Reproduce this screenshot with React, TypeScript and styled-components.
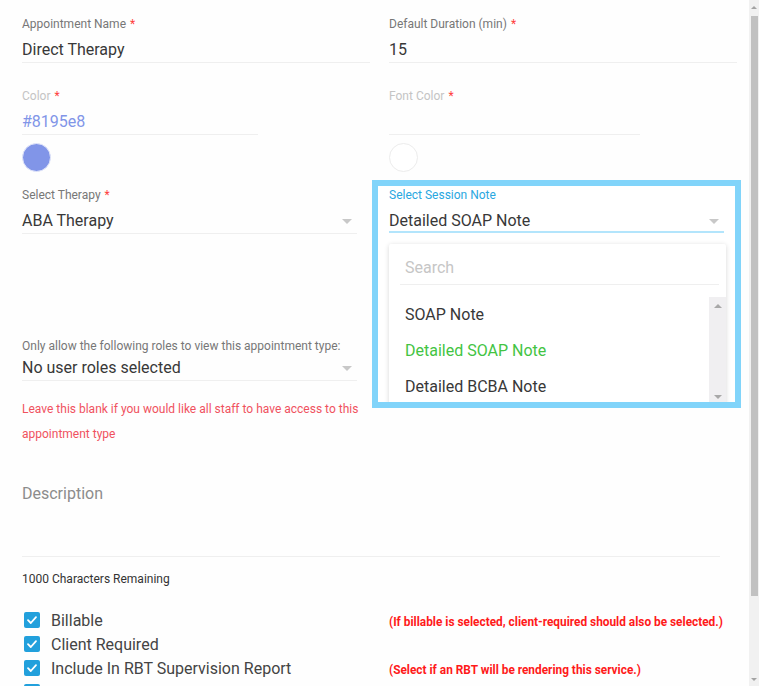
import React from "react";
import styled, { createGlobalStyle } from "styled-components";

type Tone = "normal" | "muted" | "focus";

const labelColors: { [key in Tone]: string } = {
  normal: "#777777",
  muted: "#c4c4c4",
  focus: "#2aa7df",
};

const GlobalStyle = createGlobalStyle`
  html, body {
    margin: 0;
    padding: 0;
    height: 100%;
    overflow: hidden;
  }
  body {
    font-family: Roboto, "Liberation Sans", Arial, sans-serif;
    background: #ffffff;
    color: #383838;
  }
  #root {
    height: 100%;
  }
`;

const Page = styled.div`
  display: flex;
  height: 100vh;
  overflow: hidden;
  background: #fefefe;
`;

const Content = styled.div`
  flex: 1;
  overflow: hidden;
`;

/* drawn scrollbar: rail with arrow buttons and a thumb */
const Rail = styled.div<{ $width: number; $bg: string }>`
  flex: none;
  display: flex;
  flex-direction: column;
  width: ${(p) => p.$width}px;
  background: ${(p) => p.$bg};
`;

const ArrowButton = styled.div<{ $size: number }>`
  flex: none;
  height: ${(p) => p.$size}px;
  display: flex;
  align-items: center;
  justify-content: center;
`;

const Arrow = styled.span<{ $dir: "up" | "down"; $half: number; $color: string }>`
  width: 0;
  height: 0;
  border-left: ${(p) => p.$half}px solid transparent;
  border-right: ${(p) => p.$half}px solid transparent;
  ${(p) =>
    p.$dir === "up"
      ? `border-bottom: ${p.$half}px solid ${p.$color};`
      : `border-top: ${p.$half}px solid ${p.$color};`}
`;

const Track = styled.div`
  flex: 1;
`;

const Thumb = styled.div`
  height: 580px;
  margin: 2px 1px 0 2px;
  background: #c1c1c1;
`;

const Form = styled.div`
  padding: 16px 0 74px 22px;
  width: 715px;
`;

const TwoCol = styled.div<{ $gap: number }>`
  display: grid;
  grid-template-columns: 348px 348px;
  column-gap: 19px;
  margin-top: ${(p) => p.$gap}px;
`;

const Field = styled.div<{ $width?: number }>`
  width: ${(p) => (p.$width ? `${p.$width}px` : "100%")};
`;

const Label = styled.div<{ $tone?: Tone }>`
  font-size: 12px;
  line-height: 16px;
  color: ${(p) => labelColors[p.$tone || "normal"]};
  white-space: nowrap;
`;

const Req = styled.span`
  color: #ff3d3d;
  margin-left: 4px;
`;

const Value = styled.div<{ $color?: string; $gap?: number; $focused?: boolean }>`
  display: flex;
  align-items: center;
  justify-content: space-between;
  margin-top: ${(p) => (p.$gap === undefined ? 8 : p.$gap)}px;
  min-height: 20px;
  font-size: 16px;
  line-height: 20px;
  color: ${(p) => p.$color || "#383838"};
  padding-bottom: ${(p) => (p.$focused ? 0 : 2)}px;
  border-bottom: ${(p) => (p.$focused ? "2px solid #b3e5fc" : "1px solid #efefef")};
`;

const Caret = styled.span`
  width: 0;
  height: 0;
  margin-right: 5px;
  border-left: 5px solid transparent;
  border-right: 5px solid transparent;
  border-top: 5px solid #c8c8c8;
`;

const Swatch = styled.div<{ $fill: string; $ring: string }>`
  width: 29px;
  height: 29px;
  box-sizing: border-box;
  margin-top: 8px;
  border-radius: 50%;
  background: ${(p) => p.$fill};
  border: 1px solid ${(p) => p.$ring};
`;

const SessionCell = styled.div`
  position: relative;
`;

/* highlight ring drawn around the open session-note select */
const FocusFrame = styled.div`
  position: absolute;
  top: -7px;
  left: -17px;
  width: 369px;
  height: 228px;
  box-sizing: border-box;
  border: 6px solid #81d4fa;
  background: #ffffff;
  padding: 1px 11px 0;
  overflow: hidden;
  z-index: 2;
`;

const Menu = styled.div`
  width: 337px;
  margin-top: 11px;
  background: #ffffff;
  border-radius: 2px;
  box-shadow: 0 1px 5px rgba(0, 0, 0, 0.16);
`;

const SearchRow = styled.div`
  padding: 14px 16px 6px;
  font-size: 16px;
  line-height: 20px;
  color: #c6c6c6;
`;

const Divider = styled.div`
  margin: 0 7px 0 11px;
  border-bottom: 1px solid #efefef;
`;

const OptionPane = styled.div`
  display: flex;
  margin-top: 12px;
  height: 108px;
`;

const OptionList = styled.div`
  flex: 1;
  margin-top: -1px;
`;

const Option = styled.div<{ $selected?: boolean }>`
  height: 36px;
  display: flex;
  align-items: center;
  padding-left: 16px;
  font-size: 16px;
  color: ${(p) => (p.$selected ? "#43c443" : "#383838")};
`;

const Block = styled.div<{ $gap: number; $width?: number }>`
  margin-top: ${(p) => p.$gap}px;
  width: ${(p) => (p.$width ? `${p.$width}px` : "auto")};
`;

const Hint = styled.div`
  margin-top: 16px;
  font-size: 12px;
  line-height: 25px;
  color: #f0525e;
`;

const TextArea = styled.div`
  width: 698px;
  height: 73px;
  box-sizing: border-box;
  font-size: 16px;
  line-height: 20px;
  color: #8c8c8c;
  border-bottom: 1px solid #efefef;
`;

const Counter = styled.div`
  margin-top: 15px;
  font-size: 12px;
  line-height: 14px;
  color: #333333;
`;

const CheckList = styled.div`
  margin-top: 22px;
`;

const CheckRow = styled.div`
  display: grid;
  grid-template-columns: 348px 348px;
  column-gap: 19px;
  height: 24px;
  align-items: center;
`;

const CheckItem = styled.label`
  display: flex;
  align-items: center;
  gap: 11px;
  padding-left: 2px;
  font-size: 16px;
  color: #444444;
`;

const Box = styled.span`
  display: inline-flex;
  align-items: center;
  justify-content: center;
  width: 16px;
  height: 16px;
  border-radius: 2px;
  background: #22a0dc;
`;

const Note = styled.div`
  padding-top: 3px;
  font-size: 11.85px;
  font-weight: 700;
  color: #ff1a1a;
  white-space: nowrap;
`;

const Checkbox: React.FC = () => (
  <Box>
    <svg width="12" height="12" viewBox="0 0 12 12">
      <polyline
        points="2,6.2 4.8,9 10,3.2"
        fill="none"
        stroke="#ffffff"
        strokeWidth="1.8"
        strokeLinecap="round"
        strokeLinejoin="round"
      />
    </svg>
  </Box>
);

const checks: { label: string; note?: string }[] = [
  { label: "Billable", note: "(If billable is selected, client-required should also be selected.)" },
  { label: "Client Required" },
  { label: "Include In RBT Supervision Report", note: "(Select if an RBT will be rendering this service.)" },
  { label: "" },
];

const sessionNotes = ["SOAP Note", "Detailed SOAP Note", "Detailed BCBA Note"];

export default function App() {
  return (
    <>
      <GlobalStyle />
      <Page>
        <Content>
          <Form>
            <TwoCol $gap={0}>
              <Field>
                <Label>
                  Appointment Name<Req>*</Req>
                </Label>
                <Value>Direct Therapy</Value>
              </Field>
              <Field>
                <Label>
                  Default Duration (min)<Req>*</Req>
                </Label>
                <Value>15</Value>
              </Field>
            </TwoCol>

            <TwoCol $gap={25}>
              <div>
                <Field $width={236}>
                  <Label $tone="muted">
                    Color<Req>*</Req>
                  </Label>
                  <Value $color="#8195e8">#8195e8</Value>
                </Field>
                <Swatch $fill="#8195e8" $ring="#e4e8fa" />
              </div>
              <div>
                <Field $width={251}>
                  <Label $tone="muted">
                    Font Color<Req>*</Req>
                  </Label>
                  <Value />
                </Field>
                <Swatch $fill="#ffffff" $ring="#ececec" />
              </div>
            </TwoCol>

            <TwoCol $gap={15}>
              <Field $width={335}>
                <Label>
                  Select Therapy<Req>*</Req>
                </Label>
                <Value>
                  ABA Therapy
                  <Caret />
                </Value>
              </Field>
              <SessionCell>
                <FocusFrame>
                  <Field $width={335}>
                    <Label $tone="focus">Select Session Note</Label>
                    <Value $gap={8} $focused>
                      Detailed SOAP Note
                      <Caret />
                    </Value>
                  </Field>
                  <Menu>
                    <SearchRow>Search</SearchRow>
                    <Divider />
                    <OptionPane>
                      <OptionList>
                        {sessionNotes.map((name) => (
                          <Option key={name} $selected={name === "Detailed SOAP Note"}>
                            {name}
                          </Option>
                        ))}
                      </OptionList>
                      <Rail $width={17} $bg="#f0eff1">
                        <ArrowButton $size={17}>
                          <Arrow $dir="up" $half={4} $color="#a8a8a8" />
                        </ArrowButton>
                        <Track />
                        <ArrowButton $size={17}>
                          <Arrow $dir="down" $half={4} $color="#a8a8a8" />
                        </ArrowButton>
                      </Rail>
                    </OptionPane>
                  </Menu>
                </FocusFrame>
              </SessionCell>
            </TwoCol>

            <Block $gap={104} $width={370}>
              <Field $width={335}>
                <Label>Only allow the following roles to view this appointment type:</Label>
                <Value $gap={4}>
                  No user roles selected
                  <Caret />
                </Value>
              </Field>
              <Hint>Leave this blank if you would like all staff to have access to this appointment type</Hint>
            </Block>

            <Block $gap={37}>
              <TextArea>Description</TextArea>
            </Block>
            <Counter>1000 Characters Remaining</Counter>

            <CheckList>
              {checks.map((c, i) => (
                <CheckRow key={i}>
                  <CheckItem>
                    <Checkbox />
                    {c.label}
                  </CheckItem>
                  {c.note ? <Note>{c.note}</Note> : <span />}
                </CheckRow>
              ))}
            </CheckList>
          </Form>
        </Content>
        <Rail $width={10} $bg="#f1f1f1">
          <ArrowButton $size={14}>
            <Arrow $dir="up" $half={3} $color="#a3a3a3" />
          </ArrowButton>
          <Track>
            <Thumb />
          </Track>
          <ArrowButton $size={14}>
            <Arrow $dir="down" $half={3} $color="#a3a3a3" />
          </ArrowButton>
        </Rail>
      </Page>
    </>
  );
}
